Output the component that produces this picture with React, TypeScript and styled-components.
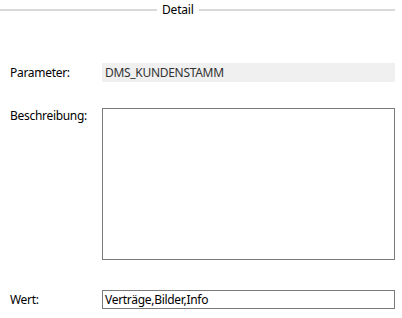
import React from 'react';
import styled, { createGlobalStyle } from 'styled-components';

const GlobalStyle = createGlobalStyle`
	html, body {
		margin: 0;
		padding: 0;
		background: #ffffff;
	}
	body {
		font-family: "Noto Sans", "Open Sans", sans-serif;
		font-size: 12px;
		color: #000000;
	}
`;

const Panel = styled.div`
	width: 402px;
	height: 318px;
	box-sizing: border-box;
	padding: 0 7px 0 0;
	display: flex;
	flex-direction: column;
`;

const Legend = styled.div`
	display: flex;
	align-items: center;
	height: 20px;
	gap: 5px;
`;

const Rule = styled.div<{ $grow?: boolean }>`
	height: 2px;
	background: #d9d9d9;
	${({ $grow }) => ($grow ? 'flex: 1;' : 'width: 157px;')}
`;

const LegendText = styled.span`
	font-size: 12px;
	line-height: 16px;
	color: #000000;
	letter-spacing: -0.2px;
`;

const Row = styled.div<{ $top: number }>`
	display: grid;
	grid-template-columns: 102px 1fr;
	align-items: start;
	margin-top: ${({ $top }) => $top}px;
`;

const Label = styled.label<{ $height: number }>`
	padding-left: 10px;
	height: ${({ $height }) => $height}px;
	line-height: ${({ $height }) => $height}px;
	font-size: 12px;
	letter-spacing: -0.3px;
	color: #000000;
`;

const ReadOnlyField = styled.div`
	height: 19px;
	line-height: 19px;
	background: #f0f0f0;
	padding-left: 3px;
	font-size: 12px;
	letter-spacing: -0.3px;
	color: #333333;
`;

const TextArea = styled.div`
	height: 152px;
	box-sizing: border-box;
	border: 1px solid #7a7a7a;
	background: #ffffff;
`;

const Input = styled.div`
	height: 19px;
	box-sizing: border-box;
	border: 1px solid #7a7a7a;
	padding-left: 2px;
	line-height: 17px;
	font-size: 12px;
	letter-spacing: -0.3px;
	color: #000000;
	background: #ffffff;
`;

const App = () => {
	return (
		<>
			<GlobalStyle />
			<Panel>
				<Legend>
					<Rule />
					<LegendText>Detail</LegendText>
					<Rule $grow />
				</Legend>

				<Row $top={43}>
					<Label $height={19}>Parameter:</Label>
					<ReadOnlyField>DMS_KUNDENSTAMM</ReadOnlyField>
				</Row>

				<Row $top={26}>
					<Label $height={16}>Beschreibung:</Label>
					<TextArea />
				</Row>

				<Row $top={30}>
					<Label $height={19}>Wert:</Label>
					<Input>Verträge,Bilder,Info</Input>
				</Row>
			</Panel>
		</>
	);
};

export default App;
